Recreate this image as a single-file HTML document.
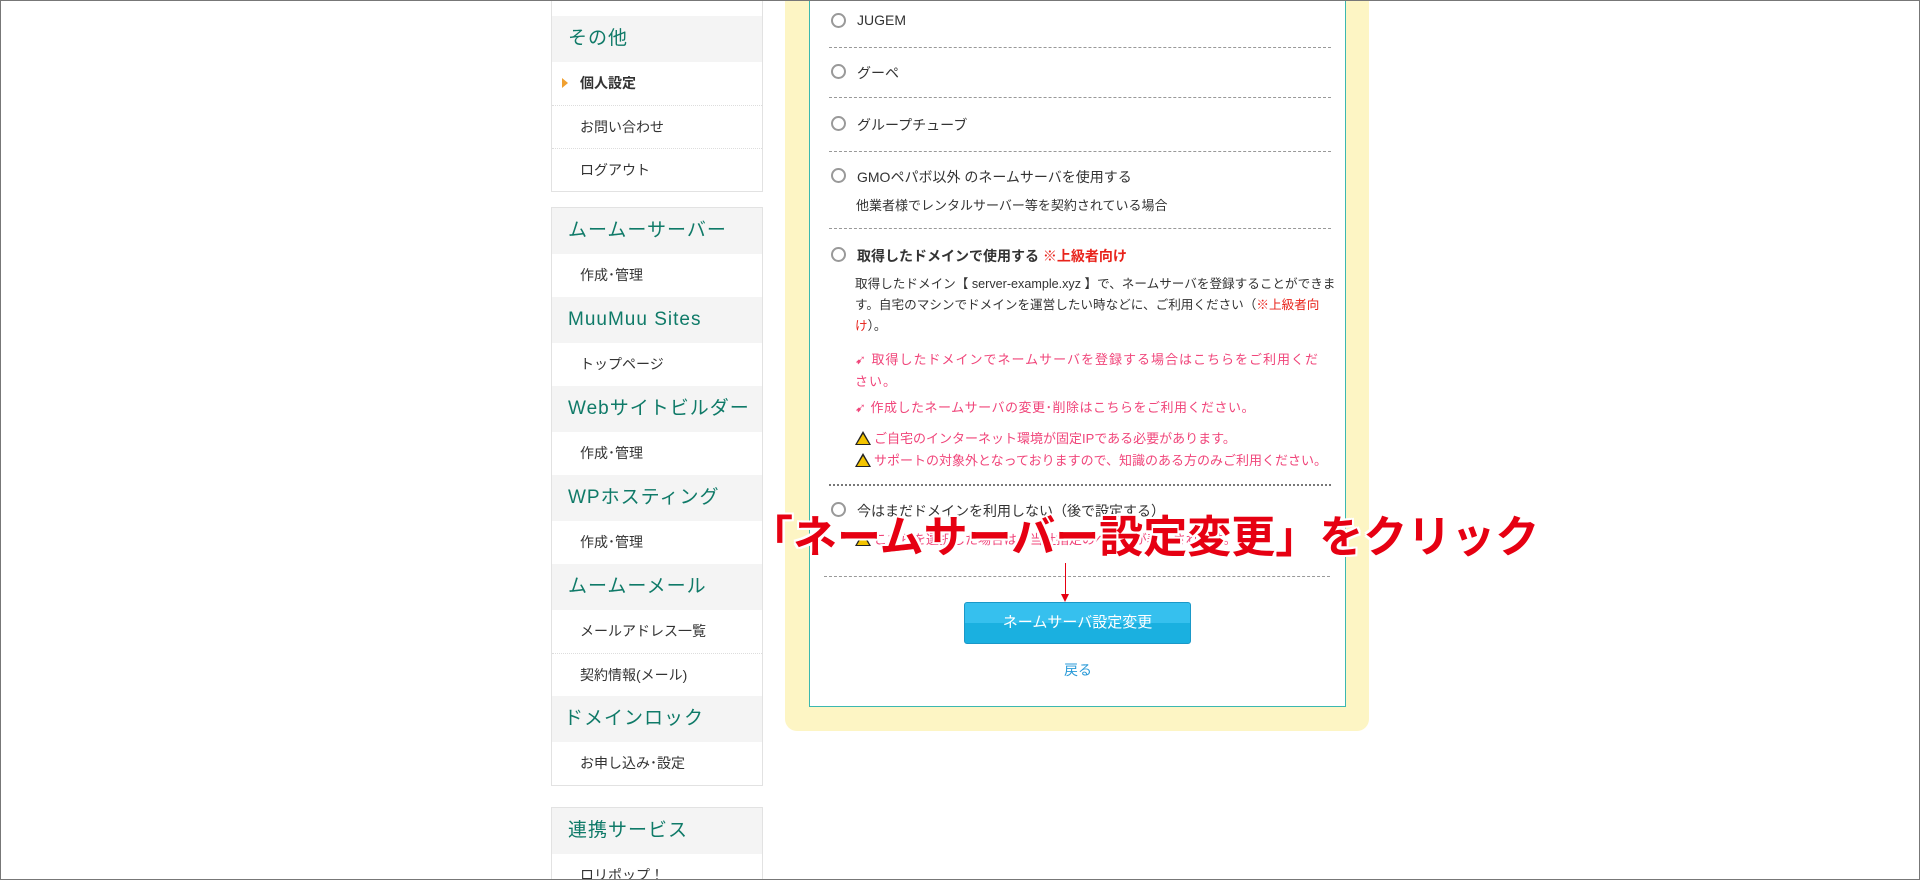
<!DOCTYPE html>
<html style="overflow:hidden;width:1920px;height:880px"><head><meta charset="utf-8"><style>
*{margin:0;padding:0;box-sizing:border-box}
body{width:1920px;height:880px;overflow:hidden;background:#fff;font-family:"Liberation Sans","Noto Sans CJK JP",sans-serif;color:#333;position:relative}
.frame{position:absolute;left:0;top:0;width:1920px;height:880px;border:1px solid #777;pointer-events:none;z-index:9}
.side{position:absolute;left:551px;width:212px;border:1px solid #e2e2e2;background:#fff}
.h{height:46px;background:#f4f4f4;color:#0f7a68;font-size:19px;line-height:46px;padding-left:16px;letter-spacing:1px}
.i{height:43px;line-height:43px;font-size:14px;padding-left:28px;border-top:1px dotted #ddd;color:#333}
.h+.i{border-top:none}
.yel{position:absolute;left:785px;top:-20px;width:584px;height:751px;background:#fdf5c4;border-radius:12px}
.box{position:absolute;left:809px;top:-2px;width:537px;height:709px;background:#fff;border:1px solid #3cb8b0}
.a{position:absolute;font-size:14px;white-space:nowrap}
.r{position:absolute;left:831px;width:15px;height:15px;border:2px solid #999;border-radius:50%;background:#fff}
.d{position:absolute;left:829px;width:502px;border-top:1px dashed #999}
.pk{color:#f0457a}
.rd{color:#e8231b}
.w{display:inline-block;width:0;height:0;border-left:8px solid transparent;border-right:8px solid transparent;border-bottom:14px solid #222;position:relative;vertical-align:-2px;margin-right:3px}
.w:after{content:"";position:absolute;left:-6px;top:3px;border-left:6px solid transparent;border-right:6px solid transparent;border-bottom:10px solid #f3c400}
.btn{position:absolute;left:964px;top:602px;width:227px;height:42px;border-radius:3px;background:linear-gradient(#36c0ee 50%,#1ab0e0 50%);border:1px solid #1a98c8;color:#fff;font-size:15px;text-align:center;line-height:40px}
.big{position:absolute;left:749px;top:501px;font-size:44px;font-weight:bold;color:#e60012;white-space:nowrap;text-shadow:2px 0 #fff,-2px 0 #fff,0 2px #fff,0 -2px #fff,2px 2px #fff,-2px -2px #fff,2px -2px #fff,-2px 2px #fff}
</style></head><body>
<div class="frame"></div>
<div class="side" style="top:-30px">
<div class="i" style="height:45px"></div>
<div class="h">その他</div>
<div class="i" style="font-weight:bold;position:relative"><span style="position:absolute;left:10px;top:16px;border-left:6px solid #f0a030;border-top:5px solid transparent;border-bottom:5px solid transparent"></span>個人設定</div>
<div class="i">お問い合わせ</div>
<div class="i">ログアウト</div>
</div>
<div class="side" style="top:207px">
<div class="h">ムームーサーバー</div><div class="i">作成･管理</div>
<div class="h">MuuMuu Sites</div><div class="i">トップページ</div>
<div class="h">Webサイトビルダー</div><div class="i">作成･管理</div>
<div class="h">WPホスティング</div><div class="i">作成･管理</div>
<div class="h">ムームーメール</div><div class="i">メールアドレス一覧</div><div class="i">契約情報(メール)</div>
<div class="h" style="padding-left:12px">ドメインロック</div><div class="i">お申し込み･設定</div>
</div>
<div class="side" style="top:807px;height:80px"><div class="h">連携サービス</div><div class="i">ロリポップ！</div></div>

<div class="yel"></div><div class="box"></div>
<div class="r" style="top:13px"></div><div class="a" style="left:857px;top:12px">JUGEM</div>
<div class="d" style="top:47px"></div>
<div class="r" style="top:64px"></div><div class="a" style="left:857px;top:63px">グーペ</div>
<div class="d" style="top:97px"></div>
<div class="r" style="top:116px"></div><div class="a" style="left:857px;top:115px">グループチューブ</div>
<div class="d" style="top:151px"></div>
<div class="r" style="top:168px"></div><div class="a" style="left:857px;top:167px">GMOペパボ以外 のネームサーバを使用する</div>
<div class="a" style="left:856px;top:195px;font-size:13px">他業者様でレンタルサーバー等を契約されている場合</div>
<div class="d" style="top:228px"></div>
<div class="r" style="top:247px"></div><div class="a" style="left:857px;top:246px;font-weight:bold">取得したドメインで使用する <span class="rd">※上級者向け</span></div>
<div class="a" style="left:855px;top:274px;font-size:12.6px;line-height:21px;white-space:normal;width:482px">取得したドメイン【 server-example.xyz 】で、ネームサーバを登録することができます。自宅のマシンでドメインを運営したい時などに、ご利用ください（<span class="rd">※上級者向け</span>）。</div>
<div class="a pk" style="left:855px;top:349px;font-size:13px;line-height:22px;white-space:normal;width:470px;letter-spacing:1px">➹ 取得したドメインでネームサーバを登録する場合はこちらをご利用ください。</div>
<div class="a pk" style="left:855px;top:397px;font-size:13px;letter-spacing:0.5px">➹ 作成したネームサーバの変更･削除はこちらをご利用ください。</div>
<div class="a pk" style="left:855px;top:428px;font-size:13px"><span class="w"></span>ご自宅のインターネット環境が固定IPである必要があります。</div>
<div class="a pk" style="left:855px;top:450px;font-size:13px"><span class="w"></span>サポートの対象外となっておりますので、知識のある方のみご利用ください。</div>
<div class="d" style="top:484px;border-top:2px dotted #777"></div>
<div class="r" style="top:502px"></div><div class="a" style="left:857px;top:501px">今はまだドメインを利用しない（後で設定する）</div>
<div class="a pk" style="left:855px;top:529px;font-size:13px"><span class="w"></span>こちらを選択した場合は、当社指定のページが表示されます。</div>
<div class="d" style="top:576px;left:824px;width:506px"></div>
<div class="big">「ネームサーバー設定変更」をクリック</div>
<div style="position:absolute;left:1065px;top:563px;width:1px;height:36px;background:#e60012"></div>
<div style="position:absolute;left:1061px;top:594px;border-top:8px solid #e60012;border-left:4px solid transparent;border-right:4px solid transparent"></div>
<div class="btn">ネームサーバ設定変更</div>
<div class="a" style="left:1064px;top:660px;color:#2a9ad8;font-size:14px">戻る</div>
</body></html>
